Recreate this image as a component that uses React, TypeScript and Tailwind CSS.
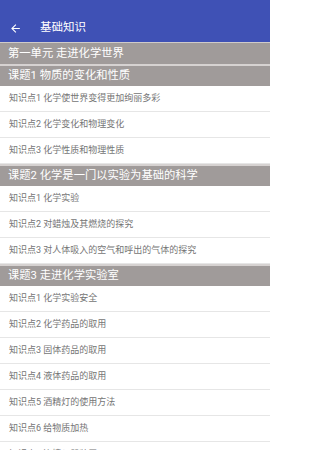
import React from "react";

type Row = { kind: "unit" | "topic" | "item"; text: string };

const rows: Row[] = [
  { kind: "unit", text: "第一单元 走进化学世界" },
  { kind: "topic", text: "课题1 物质的变化和性质" },
  { kind: "item", text: "知识点1 化学使世界变得更加绚丽多彩" },
  { kind: "item", text: "知识点2 化学变化和物理变化" },
  { kind: "item", text: "知识点3 化学性质和物理性质" },
  { kind: "topic", text: "课题2 化学是一门以实验为基础的科学" },
  { kind: "item", text: "知识点1 化学实验" },
  { kind: "item", text: "知识点2 对蜡烛及其燃烧的探究" },
  { kind: "item", text: "知识点3 对人体吸入的空气和呼出的气体的探究" },
  { kind: "topic", text: "课题3 走进化学实验室" },
  { kind: "item", text: "知识点1 化学实验安全" },
  { kind: "item", text: "知识点2 化学药品的取用" },
  { kind: "item", text: "知识点3 固体药品的取用" },
  { kind: "item", text: "知识点4 液体药品的取用" },
  { kind: "item", text: "知识点5 酒精灯的使用方法" },
  { kind: "item", text: "知识点6 给物质加热" },
  { kind: "item", text: "知识点7 连接仪器装置" },
  { kind: "item", text: "知识点8 洗涤玻璃仪器" },
];

export default function App() {
  return (
    <div
      className="w-[270px] h-[450px] overflow-hidden bg-white"
      style={{ fontFamily: "Roboto, 'Noto Sans CJK SC', sans-serif" }}
    >
      <div className="h-[42px] bg-[#3f51b5] pt-[14px]">
        <div className="h-[28px] flex items-center">
          <svg
            className="ml-[9px] w-[13px] h-[13px]"
            viewBox="0 0 24 24"
            fill="#ffffff"
          >
            <path d="M20 11H7.83l5.59-5.59L12 4l-8 8 8 8 1.41-1.41L7.83 13H20v-2z" />
          </svg>
          <span className="ml-[18px] text-[11.5px] text-white leading-none">
            基础知识
          </span>
        </div>
      </div>
      {rows.map((r, i) =>
        r.kind === "item" ? (
          <div
            key={i}
            className="h-[26px] border-b border-[#e6e6e6] flex items-center pl-[9px] text-[9px] text-[#757575] leading-none whitespace-nowrap"
          >
            {r.text}
          </div>
        ) : (
          <div
            key={i}
            className={
              r.kind === "unit"
                ? "h-[22px] border-t border-[#cfcbca] bg-[#a09b9a] flex items-center pl-[8px] text-[11.3px] text-white leading-none whitespace-nowrap"
                : "h-[22px] border-t-2 border-[#d6d2d1] bg-[#a09b9a] flex items-center pl-[8px] text-[11.3px] text-white leading-none whitespace-nowrap"
            }
          >
            {r.text}
          </div>
        )
      )}
    </div>
  );
}
